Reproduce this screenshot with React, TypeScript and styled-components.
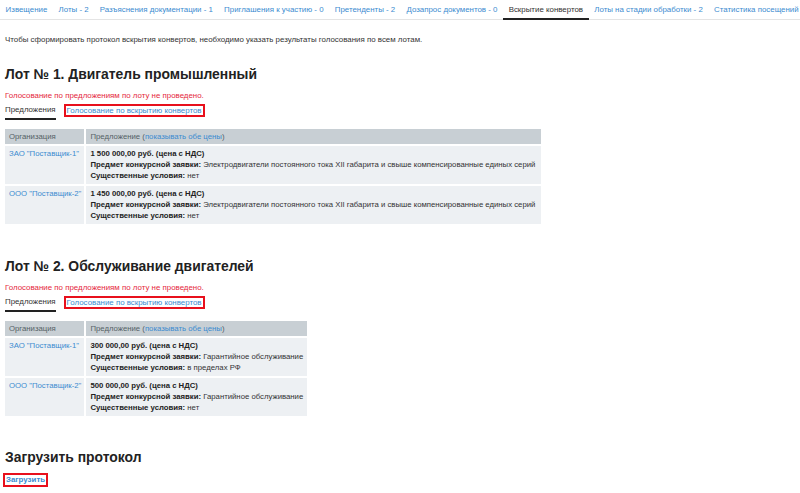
import React from 'react';
import styled, { createGlobalStyle } from 'styled-components';

const GlobalStyle = createGlobalStyle`
  body {
    margin: 0;
    background: #ffffff;
    font-family: "Liberation Sans", Arial, sans-serif;
    color: #333333;
  }
`;

const Page = styled.div`
  padding: 0 5px;
  width: 790px;
`;

const NavBar = styled.div`
  display: flex;
  border-bottom: 1px solid #e4e4e4;
  height: 19px;
  margin: 0 -5px;
`;

const NavTab = styled.a<{ $active?: boolean }>`
  display: block;
  padding: 4px 5.6px 0;
  font-size: 7.9px;
  line-height: 12px;
  white-space: nowrap;
  text-decoration: none;
  color: ${p => (p.$active ? '#333333' : '#3b8bd0')};
  border-bottom: 2px solid ${p => (p.$active ? '#222222' : 'transparent')};
  margin-bottom: -1px;
  height: 14px;
  box-sizing: content-box;
`;

const Intro = styled.p`
  margin: 14px 0 0;
  font-size: 7.9px;
  line-height: 11px;
`;

const LotTitle = styled.h2<{ $gap: number }>`
  margin: ${p => p.$gap}px 0 0;
  font-size: 13.9px;
  line-height: 18px;
  font-weight: 700;
  color: #222222;
`;

const Warning = styled.div`
  margin-top: 7px;
  font-size: 7.9px;
  line-height: 11px;
  color: #e5283c;
`;

const SubTabs = styled.div`
  display: flex;
  align-items: flex-end;
  gap: 8px;
  margin-top: 3px;
  height: 16px;
`;

const SubTab = styled.span`
  font-size: 7.9px;
  line-height: 11px;
  padding-bottom: 3px;
  border-bottom: 2px solid #222222;
`;

const Boxed = styled.a`
  display: inline-block;
  font-size: 7.9px;
  line-height: 9px;
  color: #3b8bd0;
  text-decoration: none;
  border: 2px solid #e8101c;
  padding: 0 1px;
  margin-bottom: 3px;
`;

const Table = styled.table<{ $width: number }>`
  width: ${p => p.$width}px;
  margin-top: 9px;
  border-collapse: separate;
  border-spacing: 0;
  font-size: 7.75px;
  line-height: 11px;
`;

const Th = styled.th<{ $grow?: boolean }>`
  background: #c8cfd4;
  color: #555f66;
  font-weight: 400;
  text-align: left;
  padding: 2px 3px 2px 4px;
  height: 11px;
  white-space: nowrap;
  border-right: 2px solid #ffffff;
  ${p => (p.$grow ? 'width: 100%;' : '')}
  &:last-child { border-right: none; }
`;

const Td = styled.td`
  background: #edf0f3;
  vertical-align: top;
  padding: 2px 3px 3px 4px;
  border-top: 2px solid #ffffff;
  border-right: 2px solid #ffffff;
  white-space: nowrap;
  &:last-child { border-right: none; }
`;

const Link = styled.a`
  color: #3b8bd0;
  text-decoration: none;
`;

const Bold = styled.b`
  font-weight: 700;
  color: #222222;
`;

const UploadTitle = styled.h2`
  margin: 32px 0 0;
  font-size: 13.9px;
  line-height: 18px;
  font-weight: 700;
  color: #222222;
`;

const UploadLink = styled.a`
  display: inline-block;
  margin: 7px 0 0 -2px;
  font-size: 7.9px;
  line-height: 10px;
  font-weight: 700;
  color: #3b8bd0;
  text-decoration: none;
  border: 2px solid #e8101c;
  padding: 0 1px;
`;

type Offer = {
  org: string;
  price: string;
  subject: string;
  terms: string;
};

type Lot = {
  title: string;
  width: number;
  offers: Offer[];
};

const tabs = [
  'Извещение',
  'Лоты - 2',
  'Разъяснения документации - 1',
  'Приглашения к участию - 0',
  'Претенденты - 2',
  'Дозапрос документов - 0',
  'Вскрытие конвертов',
  'Лоты на стадии обработки - 2',
  'Статистика посещений',
];

const lots: Lot[] = [
  {
    title: 'Лот № 1. Двигатель промышленный',
    width: 536,
    offers: [
      {
        org: 'ЗАО "Поставщик-1"',
        price: '1 500 000,00 руб. (цена с НДС)',
        subject: 'Электродвигатели постоянного тока XII габарита и свыше компенсированные единых серий',
        terms: 'нет',
      },
      {
        org: 'ООО "Поставщик-2"',
        price: '1 450 000,00 руб. (цена с НДС)',
        subject: 'Электродвигатели постоянного тока XII габарита и свыше компенсированные единых серий',
        terms: 'нет',
      },
    ],
  },
  {
    title: 'Лот № 2. Обслуживание двигателей',
    width: 302,
    offers: [
      {
        org: 'ЗАО "Поставщик-1"',
        price: '300 000,00 руб. (цена с НДС)',
        subject: 'Гарантийное обслуживание',
        terms: 'в пределах РФ',
      },
      {
        org: 'ООО "Поставщик-2"',
        price: '500 000,00 руб. (цена с НДС)',
        subject: 'Гарантийное обслуживание',
        terms: 'нет',
      },
    ],
  },
];

const LotBlock: React.FC<{ lot: Lot; first: boolean }> = ({ lot, first }) => (
  <section>
    <LotTitle $gap={first ? 20 : 33}>{lot.title}</LotTitle>
    <Warning>Голосование по предложениям по лоту не проведено.</Warning>
    <SubTabs>
      <SubTab>Предложения</SubTab>
      <Boxed href="#">Голосование по вскрытию конвертов</Boxed>
    </SubTabs>
    <Table $width={lot.width}>
      <thead>
        <tr>
          <Th>Организация</Th>
          <Th $grow>
            Предложение (<Link href="#">показывать обе цены</Link>)
          </Th>
        </tr>
      </thead>
      <tbody>
        {lot.offers.map(o => (
          <tr key={o.org}>
            <Td>
              <Link href="#">{o.org}</Link>
            </Td>
            <Td>
              <div><Bold>{o.price}</Bold></div>
              <div><Bold>Предмет конкурсной заявки:</Bold> {o.subject}</div>
              <div><Bold>Существенные условия:</Bold> {o.terms}</div>
            </Td>
          </tr>
        ))}
      </tbody>
    </Table>
  </section>
);

export default function App() {
  return (
    <>
      <GlobalStyle />
      <Page>
        <NavBar>
          {tabs.map(t => (
            <NavTab key={t} href="#" $active={t === 'Вскрытие конвертов'}>
              {t}
            </NavTab>
          ))}
        </NavBar>
        <Intro>
          Чтобы сформировать протокол вскрытия конвертов, необходимо указать результаты голосования по всем лотам.
        </Intro>
        {lots.map((lot, i) => (
          <LotBlock key={lot.title} lot={lot} first={i === 0} />
        ))}
        <UploadTitle>Загрузить протокол</UploadTitle>
        <div>
          <UploadLink href="#">Загрузить</UploadLink>
        </div>
      </Page>
    </>
  );
}
